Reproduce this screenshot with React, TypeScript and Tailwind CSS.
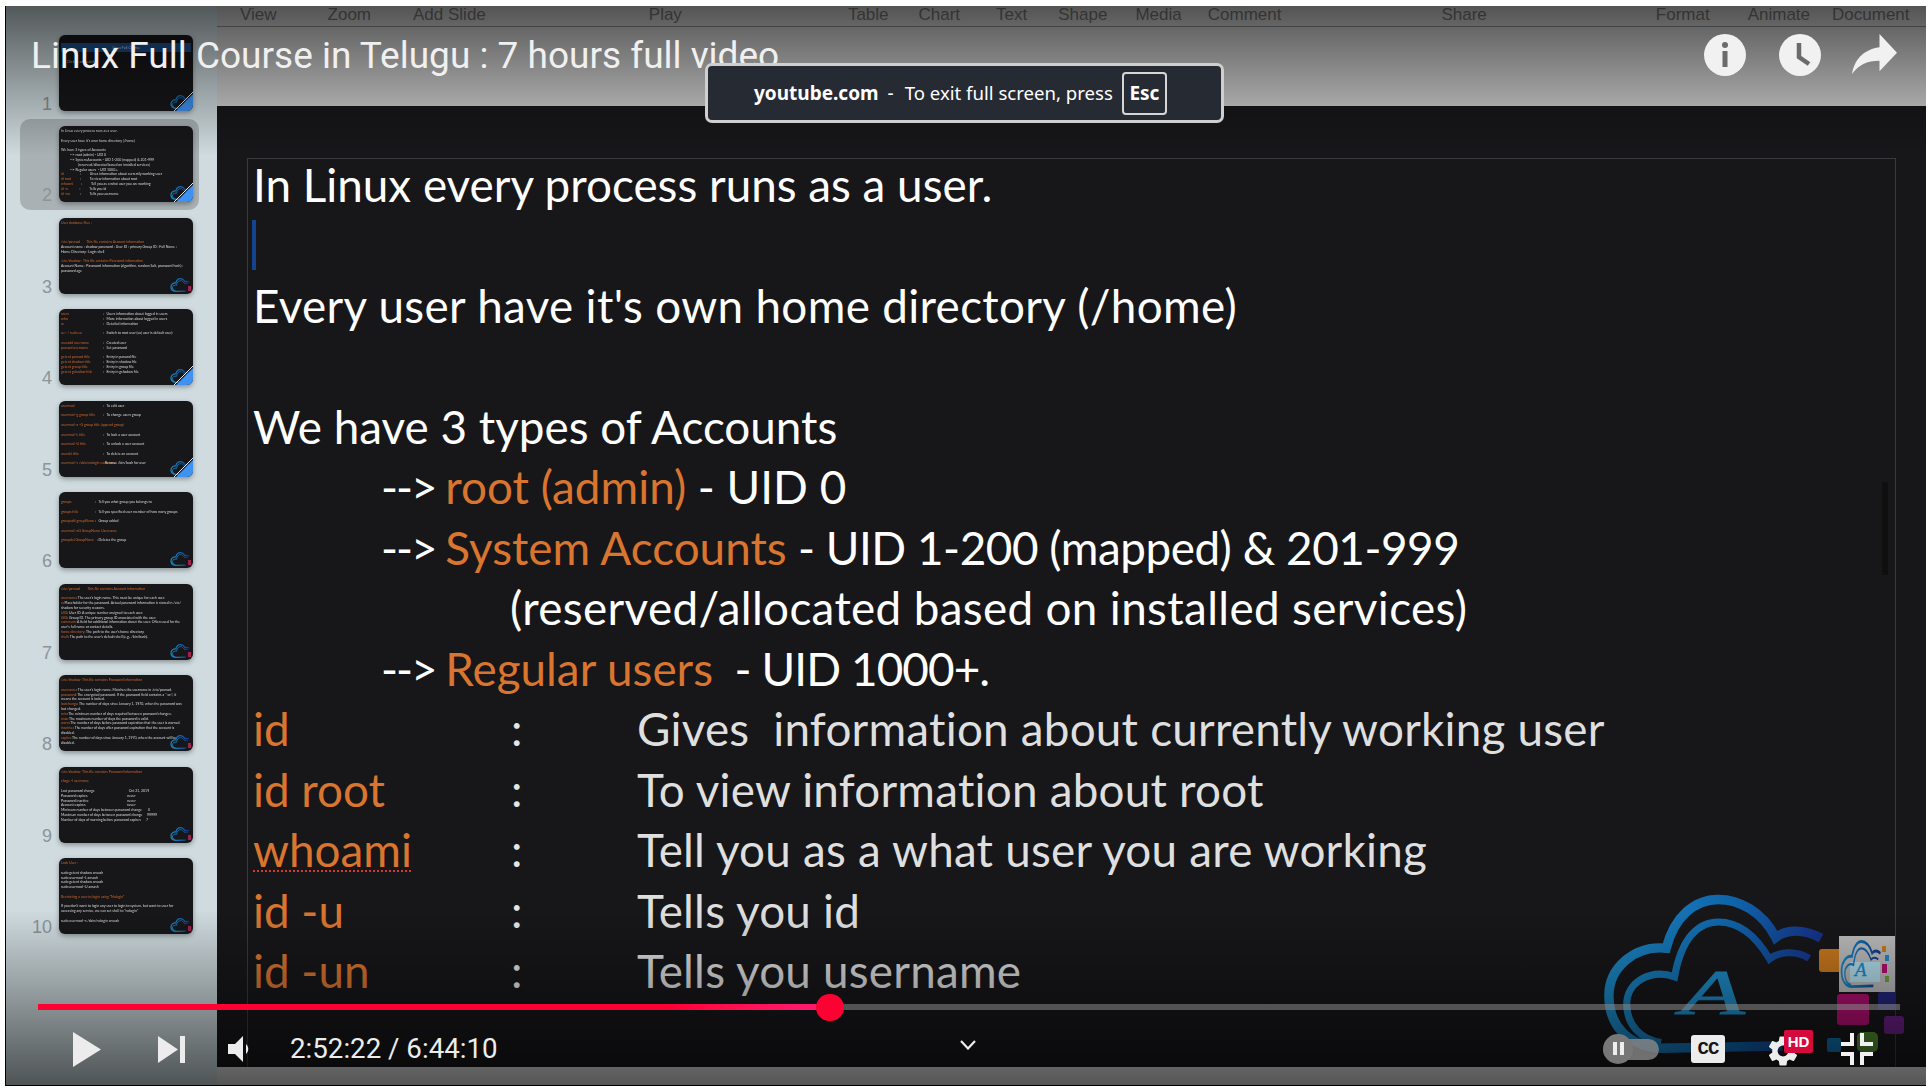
import React from "react";
import { MdSettings } from "react-icons/md";

function CloudMark({ className, letter = true, thick = 1, stretch = false }: { className: string; letter?: boolean; thick?: number; stretch?: boolean }) {
  return (
    <svg viewBox="120 30 680 490" className={className} fill="none" preserveAspectRatio={stretch ? "none" : "xMidYMid meet"}>
      <defs>
        <linearGradient id="cloudgrad" gradientUnits="userSpaceOnUse" x1="140" y1="0" x2="780" y2="0">
          <stop offset="0" stopColor="#1b8ac6" />
          <stop offset="0.6" stopColor="#0f62a8" />
          <stop offset="1" stopColor="#17308a" />
        </linearGradient>
      </defs>
      <path d="M775 170 C720 140 670 145 640 168 C600 90 530 55 470 55 C400 55 340 105 315 200 C220 190 145 260 145 340 C145 430 200 490 300 497 L660 490" stroke="url(#cloudgrad)" strokeWidth={28 * thick} />
      <path d="M740 230 C700 205 650 210 622 232 C580 160 530 122 470 122 C410 122 360 170 340 285 C270 260 195 300 198 370 C200 430 240 470 300 480" stroke="url(#cloudgrad)" strokeWidth={21 * thick} />
      {letter && (
        <text x="358" y="396" textLength="190" lengthAdjust="spacingAndGlyphs" fontFamily="'Liberation Serif', serif" fontStyle="italic" fontWeight="400" fontSize="190" stroke="#1f8cc9" strokeWidth="3" fill="#1f8cc9">A</text>
      )}
    </svg>
  );
}

type Line = [string, string?];

function Thumb({ n, lines, col, fold, selected, children }: { n: number; lines?: Line[]; col?: string; fold?: boolean; selected?: boolean; children?: React.ReactNode }) {
  return (
    <div className={`flex h-[91.5px] items-center rounded-[10px] ${selected ? "bg-[#a9b1b4]" : ""}`}>
      <div className="w-[32px] self-end pb-[3px] text-right text-[18px] leading-[24px] text-[#8b9497] font-['Liberation_Sans',sans-serif]">{n}</div>
      <div className="relative ml-[7px] h-[76px] w-[134px] overflow-hidden rounded-[6px] bg-[#17171a] px-[2px] pt-[3px] font-['Lato',sans-serif] text-[3.5px] leading-[4.8px] text-[#d8d8d8] shadow-[0_2px_5px_rgba(0,0,0,0.35)]">
        <div className="blur-[0.4px]">
          {children}
          {lines?.map((l, i) => (
            <div key={i} className="flex h-[4.8px] whitespace-pre">
              {l[0] === "" ? null : <span className={`${col ?? ""} text-[#c9662a]`}>{l[0]}</span>}
              {l[1] && <span>{l[1]}</span>}
            </div>
          ))}
        </div>
        <CloudMark letter={false} thick={1.5} className="absolute bottom-[2px] right-[3px] h-[14px] w-[20px] blur-[0.3px]" />
        {fold ? (
          <svg viewBox="0 0 20 20" className="absolute bottom-0 right-0 h-[20px] w-[20px]">
            <polygon points="3,20 20,3 20,20" fill="#3f92f2" />
            <line x1="1" y1="20" x2="20" y2="1" stroke="#e8eef5" strokeWidth="1" />
          </svg>
        ) : (
          <div className="absolute bottom-[3px] right-[2px] h-[5px] w-[3px] bg-[#a02050]" />
        )}
      </div>
    </div>
  );
}

const rowCls = "h-[60.5px] leading-[60.5px] whitespace-pre";

function CmdRow({ cmd, desc, wavy }: { cmd: string; desc: string; wavy?: boolean }) {
  return (
    <div className={`grid grid-cols-[256px_128px_1fr] ${rowCls}`}>
      <div className="text-[#d9752f]">
        <span className={wavy ? "underline decoration-dotted decoration-[#d33] decoration-2 underline-offset-[3px]" : ""}>{cmd}</span>
      </div>
      <div className="pl-[2px] text-[#e6e6e6]">:</div>
      <div className="tracking-[0.22px] text-[#dfdfdf]">{desc}</div>
    </div>
  );
}

export default function App() {
  return (
    <div className="h-[1092px] w-[1932px] overflow-hidden bg-white pb-[6px] pl-[5px] pr-[6px] pt-[6px] font-['Liberation_Sans',sans-serif]">
      <div className="relative flex h-full overflow-hidden border-b border-l border-black">
        {/* slide sidebar */}
        <aside className="flex w-[211px] shrink-0 flex-col bg-[#cfdbdf] pl-[14px] pr-[18px] pt-[21px]">
          <Thumb n={1} fold>
            <div className="mt-[5px] h-[9px] bg-[#1c4f8c] text-center text-[3.6px] leading-[9px]">Linux Full Course</div>
            <div className="mt-[8px] pl-[6px] text-[#aaa]">Click to add subtitle</div>
          </Thumb>
          <Thumb n={2} fold selected lines={[
            ["", "In Linux every process runs as a user."], [""],
            ["", "Every user have it's own home directory (/home)"], [""],
            ["", "We have 3 types of Accounts"],
            ["", "          --> root (admin) - UID 0"],
            ["", "          --> System Accounts - UID 1-200 (mapped) & 201-999"],
            ["", "                   (reserved/allocated based on installed services)"],
            ["", "          --> Regular users  - UID 1000+."],
            ["id", "                  :          Gives information about currently working user"],
            ["id root", "          :          To view information about root"],
            ["whoami", "         :          Tell you as a what user you are working"],
            ["id -u", "             :          Tells you id"],
            ["id -un", "           :          Tells you username"],
          ]} />
          <Thumb n={3} lines={[
            ["User database files :"], [""], [""], [""],
            ["/etc/passwd       This file contains Account information"],
            ["", "Account name : shadow password : User ID : primary Group ID : Full Name :"],
            ["", "Home Directory : Login shell"], [""],
            ["/etc/shadow : This file contains Password information"],
            ["", "Account Name : Password information (algorithm, random Salt, password hash) :"],
            ["", "password age"],
          ]} />
          <Thumb n={4} col="w-[42px]" fold lines={[
            ["users", ":   Users information about logged in users"],
            ["who", ":   More information about logged in users"],
            ["w", ":   Detailed information"], [""],
            ["su - / sudo su", ":   Switch to root user (su) user is default user)"], [""],
            ["useradd username", ":   Created user"],
            ["passwd username", ":   Set password"], [""],
            ["getent passwd title", ":   Entry in passwd file"],
            ["getent shadow title", ":   Entry in shadow file"],
            ["getent group title", ":   Entry in group file"],
            ["getent gshadow title", ":   Entry in gshadow file"],
          ]} />
          <Thumb n={5} col="w-[42px]" fold lines={[
            ["usermod", ":   To edit user"], [""],
            ["usermod -g group title", ":   To change users group"], [""],
            ["usermod -a -G group title (append group)"], [""],
            ["usermod -L title", ":   To lock a user account"], [""],
            ["usermod -U title", ":   To unlock a user account"], [""],
            ["userdel title", ":   To delete an account"], [""],
            ["usermod -s /sbin/nologin username", "  Remove /bin/bash for user"],
          ]} />
          <Thumb n={6} col="w-[34px]" lines={[
            [""], ["groups", ":   Tell you what group you belongs to"], [""],
            ["groups title", ":   Tell you specified user member of how many groups"], [""],
            ["groupadd groupName", ":   Group added"], [""],
            ["usermod -aG GroupName Username"], [""],
            ["groupdel GroupName", "  : Deletes the group"],
          ]} />
          <Thumb n={7} lines={[
            ["/etc/passwd        This file contains Account information"], [""],
            ["username", ": The user's login name. This must be unique for each user."],
            ["x", ": Placeholder for the password. Actual password information is stored in /etc/"],
            ["", "shadow for security reasons."],
            ["UID", ": User ID. A unique number assigned to each user."],
            ["GID", ": Group ID. The primary group ID associated with the user."],
            ["comment", ": A field for additional information about the user. Often used for the"],
            ["", "user's full name or contact details."],
            ["home directory", ": The path to the user's home directory."],
            ["shell", ": The path to the user's default shell (e.g., /bin/bash)."],
          ]} />
          <Thumb n={8} lines={[
            ["/etc/shadow  This file contains Password information"], [""],
            ["username", ": The user's login name. Matches the username in /etc/passwd."],
            ["password", ": The encrypted password. If the password field contains a * or !, it"],
            ["", "means the account is locked."],
            ["lastchange", ": The number of days since January 1, 1970, when the password was"],
            ["", "last changed."],
            ["min", ": The minimum number of days required between password changes."],
            ["max", ": The maximum number of days the password is valid."],
            ["warn", ": The number of days before password expiration that the user is warned."],
            ["inactive", ": The number of days after password expiration that the account is"],
            ["", "disabled."],
            ["expire", ": The number of days since January 1, 1970, when the account will be"],
            ["", "disabled."],
          ]} />
          <Thumb n={9} lines={[
            ["/etc/shadow  This file contains Password information"], [""],
            ["chage -l username"], [""],
            ["", "Last password change                                      Oct 21, 2019"],
            ["", "Password expires                                            never"],
            ["", "Password inactive                                           never"],
            ["", "Account expires                                              never"],
            ["", "Minimum number of days between password change       0"],
            ["", "Maximum number of days between password change     99999"],
            ["", "Number of days of warning before password expires      7"],
          ]} />
          <Thumb n={10} lines={[
            ["Lock User :"], [""],
            ["", "sudo getent shadow ansash"], ["", "sudo usermod -L ansash"], ["", "sudo getent shadow ansash"], ["", "sudo usermod -U ansash"], [""],
            ["Restricting a user to login using \"Nologin\""], [""],
            ["", "If you don't want to login any user to login to system, but want to user for"],
            ["", "accessing any service, we can set shell to \"nologin\""], [""],
            ["", "sudo usermod -s /sbin/nologin ansash"],
          ]} />
        </aside>

        {/* main document */}
        <main className="flex min-w-0 flex-1 flex-col bg-[#17171a]">
          <div className="h-[100px] shrink-0 bg-[#d2d2d2]">
            <div className="flex h-[21px] items-start overflow-hidden border-b border-[#8c8c8c] text-[17px] leading-[17px] text-[#777]">
              <span className="ml-[23px]">View</span>
              <span className="ml-[51px]">Zoom</span>
              <span className="ml-[42px]">Add Slide</span>
              <span className="ml-[163px]">Play</span>
              <span className="ml-[166px]">Table</span>
              <span className="ml-[30px]">Chart</span>
              <span className="ml-[36px]">Text</span>
              <span className="ml-[31px]">Shape</span>
              <span className="ml-[28px]">Media</span>
              <span className="ml-[26px]">Comment</span>
              <span className="ml-[160px]">Share</span>
              <span className="ml-[169px]">Format</span>
              <span className="ml-[38px]">Animate</span>
              <span className="ml-[22px]">Document</span>
            </div>
          </div>
          <div className="min-h-0 flex-1 pl-[30px] pr-[30px] pt-[52px]">
            <div className="relative h-full border-l border-r border-t border-[#3a3a3e] pl-[5px] font-['Lato',sans-serif] text-[45.8px] text-white">
              <div className="-mt-[4.5px]">
                <div className={rowCls}>In Linux every process runs as a user.</div>
                <div className={`flex items-center ${rowCls}`}><div className="h-[50px] w-[4px] -translate-x-[1px] bg-[#14448f]" /></div>
                <div className={`tracking-[0.34px] ${rowCls}`}>Every user have it's own home directory (/home)</div>
                <div className={rowCls}> </div>
                <div className={rowCls}>We have 3 types of Accounts</div>
                <div className={`pl-[128px] ${rowCls}`}><span className="tracking-[-2px]">--&gt; </span><span className="text-[#d9752f]">root (admin)</span> - UID 0</div>
                <div className={`pl-[128px] ${rowCls}`}><span className="tracking-[-2px]">--&gt; </span><span className="text-[#d9752f]">System Accounts</span><span className="tracking-[-0.45px]"> - UID 1-200 (mapped) &amp; 201-999</span></div>
                <div className={`pl-[257px] tracking-[0.35px] ${rowCls}`}>(reserved/allocated based on installed services)</div>
                <div className={`pl-[128px] ${rowCls}`}><span className="tracking-[-2px]">--&gt; </span><span className="text-[#d9752f]">Regular users</span><span className="tracking-[-0.9px]">  - UID 1000+.</span></div>
                <CmdRow cmd="id" desc="Gives  information about currently working user" />
                <CmdRow cmd="id root" desc="To view information about root" />
                <CmdRow cmd="whoami" desc="Tell you as a what user you are working" wavy />
                <CmdRow cmd="id -u" desc="Tells you id" />
                <CmdRow cmd="id -un" desc="Tells you username" />
              </div>
              <div className="absolute right-[7px] top-[323px] h-[93px] w-[6px] bg-[#0f0f10]" />
            </div>
          </div>
          <div className="h-[18px] shrink-0 bg-[#e0e0e0]" />
        </main>

        {/* logo burned into the video */}
        <div className="absolute left-[1594px] top-[885px] h-[165px] w-[230px]">
          <CloudMark className="h-full w-full" />
        </div>
        <div className="absolute left-[1813px] top-[943px] h-[23px] w-[26px] rounded-[3px] bg-[#cb7a1e]" />
        <div className="absolute left-[1831px] top-[988px] h-[31px] w-[32px] rounded-[3px] bg-[#b40f72]" />
        <div className="absolute left-[1872px] top-[986px] h-[18px] w-[18px] rounded-[3px] bg-[#23277e]" />
        <div className="absolute left-[1878px] top-[1010px] h-[18px] w-[20px] rounded-[3px] bg-[#6a1f83]" />
        <div className="absolute left-[1851px] top-[1026px] h-[20px] w-[21px] rounded-[5px] bg-[#4f8a2e]" />
        <div className="absolute left-[1821px] top-[1032px] h-[14px] w-[14px] rounded-[2px] bg-[#0f6ca8]" />
        <div className="absolute left-[1833px] top-[930px] flex h-[56px] w-[56px] items-center bg-[#bdbdbd] pl-[1px]">
          <div className="absolute left-[11px] top-[26px] h-[20px] w-[30px] bg-[#b5e0f0]" />
          <CloudMark stretch className="relative h-[50px] w-[42px]" thick={1} />
          <div className="flex flex-col gap-[3px]">
            <span className="h-[6px] w-[4px] bg-[#cb7a1e]" />
            <span className="ml-[3px] h-[6px] w-[4px] bg-[#1f8cc9]" />
            <span className="h-[9px] w-[5px] bg-[#b40f72]" />
            <span className="ml-[3px] h-[6px] w-[4px] bg-[#6fa23c]" />
          </div>
        </div>

        {/* player scrims */}
        <div className="absolute inset-x-0 top-0 h-[150px] bg-linear-to-b from-black/60 to-transparent" />
        <div className="absolute inset-x-0 bottom-0 h-[175px] bg-linear-to-t from-black/62 to-transparent" />

        {/* player top */}
        <div className="absolute inset-x-0 top-[28px] flex items-start pl-[25px] pr-[29px]">
          <div className="whitespace-nowrap font-['Roboto',sans-serif] text-[37px] leading-[44px] text-[#f0f0f0]">Linux Full Course in Telugu : 7 hours full video</div>
          <div className="ml-auto flex items-start">
            <svg viewBox="0 0 42 42" className="h-[42px] w-[42px]">
              <circle cx="21" cy="21" r="21" fill="#f1f1f1" />
              <circle cx="21" cy="11" r="3" fill="#6b6b6b" />
              <rect x="18.5" y="17" width="5" height="16" fill="#6b6b6b" />
            </svg>
            <svg viewBox="0 0 42 42" className="ml-[33px] h-[42px] w-[42px]">
              <circle cx="21" cy="21" r="21" fill="#f1f1f1" />
              <path d="M20 9 V23 L30 30" fill="none" stroke="#6b6b6b" strokeWidth="4.5" />
            </svg>
            <svg viewBox="3 5 18 15" className="ml-[31px] h-[40px] w-[45px]" preserveAspectRatio="none">
              <path d="M14 10V5l7 7-7 7v-4c-5 0-8.5 1.6-11 5 1-5 4-9 11-10z" fill="#f1f1f1" />
            </svg>
          </div>
        </div>

        {/* fullscreen notice */}
        <div className="absolute left-[699px] top-[57px] flex h-[60px] w-[519px] items-center rounded-[7px] border-[3px] border-[#cfcfcf] bg-[#262a33] pl-[46px] font-['Noto_Sans',sans-serif] text-[19px] text-white">
          <span className="font-bold">youtube.com</span>
          <span className="ml-[9px]">-</span>
          <span className="ml-[11px] text-[18.6px]">To exit full screen, press</span>
          <span className="ml-[9px] flex h-[43px] w-[45px] items-center justify-center rounded-[4px] border-2 border-[#d5d5d5] font-bold">Esc</span>
        </div>

        {/* progress */}
        <div className="absolute left-[32px] top-[998px] h-[6px] w-[1862px] bg-[#8a8a8a]/55">
          <div className="relative h-full w-[792px] bg-linear-to-r from-[#ff0033] from-80% to-[#ff1a73]">
            <div className="absolute -right-[14px] -top-[10.5px] h-[27px] w-[28px] rounded-full bg-[#ff0033]" />
          </div>
        </div>

        {/* controls */}
        <div className="absolute inset-x-0 top-[1021px] flex h-[44px] items-center pl-[67px] text-[#ececec]">
          <svg viewBox="0 0 28 35" className="h-[35px] w-[28px]"><polygon points="0,0 28,17.5 0,35" fill="#ececec" /></svg>
          <svg viewBox="0 0 27 27" className="ml-[57px] h-[27px] w-[27px]"><polygon points="0,0 20,13.5 0,27" fill="#ececec" /><rect x="22" y="0" width="5" height="27" fill="#ececec" /></svg>
          <svg viewBox="0 0 23 26" className="ml-[43px] h-[26px] w-[23px]"><polygon points="0,8 7,8 15,0 15,26 7,18 0,18" fill="#ececec" /><path d="M18 8 C21 11 21 15 18 18 Z" fill="#ececec" /></svg>
          <div className="ml-[39px] w-[206px] whitespace-nowrap font-['Roboto',sans-serif] text-[27.7px] leading-[32px]">2:52:22 / 6:44:10</div>
          <svg viewBox="0 0 16 10" className="ml-[464px] -mt-[8px] h-[10px] w-[16px]"><path d="M1 1 L8 8.5 L15 1" fill="none" stroke="#ececec" strokeWidth="2.2" /></svg>
          <div className="relative ml-[627px] h-[21px] w-[56px] rounded-full bg-[#8a8a8a]/80">
            <div className="absolute -top-[5px] left-0 flex h-[30px] w-[30px] items-center justify-center gap-[3px] rounded-full bg-[#777]">
              <span className="h-[13px] w-[4px] bg-[#eee]" /><span className="h-[13px] w-[4px] bg-[#eee]" />
            </div>
          </div>
          <div className="ml-[32px] flex h-[28px] w-[34px] items-center justify-center rounded-[3px] bg-[#ececec] font-['Liberation_Mono',monospace] text-[19px] font-bold leading-none tracking-[-1px] text-[#15151a]">CC</div>
          <div className="relative ml-[42px] h-[32px] w-[32px]">
            <MdSettings className="h-[36px] w-[36px] -translate-x-[2px]" />
            <div className="absolute -top-[3px] left-[17px] flex h-[23px] w-[29px] items-center justify-center rounded-[2px] bg-[#d40b3c] text-[15px] font-bold leading-none text-white">HD</div>
          </div>
          <svg viewBox="0 0 32 32" className="ml-[42px] h-[32px] w-[32px]">
            <path d="M0 11 H11 V0 M21 0 V11 H32 M0 21 H11 V32 M32 21 H21 V32" fill="none" stroke="#f1f1f1" strokeWidth="4" />
          </svg>
        </div>
      </div>
    </div>
  );
}
